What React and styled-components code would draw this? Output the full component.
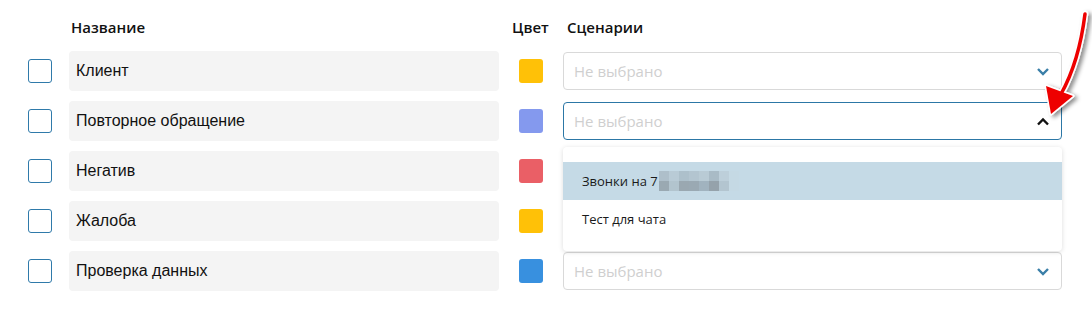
import React from "react";
import styled, { createGlobalStyle } from "styled-components";

const Global = createGlobalStyle`
  html, body { margin: 0; padding: 0; background: #fff; }
  body { font-family: "Open Sans", "Noto Sans", sans-serif; }
`;

const Page = styled.div`
  position: relative;
  width: 1092px;
  height: 311px;
  padding: 17px 0 0 28px;
  box-sizing: border-box;
  overflow: hidden;
`;

const Row = styled.div`
  display: flex;
  align-items: center;
  height: 40px;
  margin-bottom: 10px;
`;

const HeaderRow = styled.div`
  display: flex;
  align-items: center;
  height: 20px;
  margin-bottom: 14px;
`;

const HeadCell = styled.div`
  width: ${(p) => p.$w}px;
  padding-left: ${(p) => p.$pl || 0}px;
  box-sizing: border-box;
  font-family: "Open Sans", sans-serif;
  font-weight: 600;
  font-size: 15px;
  color: #111;
  line-height: 20px;
  white-space: nowrap;
`;

const Checkbox = styled.div`
  width: 24px;
  height: 24px;
  box-sizing: border-box;
  border: 1px solid #2f7aaa;
  border-radius: 3px;
  background: #fff;
  margin-right: 17px;
  flex: none;
`;

const NameBox = styled.div`
  width: 430px;
  height: 40px;
  box-sizing: border-box;
  background: #f4f4f4;
  border-radius: 4px;
  display: flex;
  align-items: center;
  padding-left: 7px;
  font-family: "Liberation Sans", Arial, sans-serif;
  font-size: 16px;
  color: #111;
  flex: none;
`;

const Swatch = styled.div`
  width: 24px;
  height: 24px;
  border-radius: 3px;
  background: ${(p) => p.$color};
  margin: 0 20px;
  flex: none;
`;

const SelectWrap = styled.div`
  position: relative;
  width: 499px;
  flex: none;
`;

const SelectBox = styled.div`
  height: 38px;
  box-sizing: border-box;
  border: 1px solid ${(p) => (p.$open ? "#2c77a6" : "#d9d9d9")};
  border-radius: 4px;
  background: #fff;
  display: flex;
  align-items: center;
  justify-content: space-between;
  padding: 0 11px 0 10px;
`;

const Placeholder = styled.span`
  font-family: "Open Sans", sans-serif;
  font-size: 15px;
  color: #cfcfcf;
`;

const Menu = styled.div`
  position: absolute;
  left: 0;
  right: 0;
  top: 45px;
  z-index: 2;
  background: #fff;
  border-radius: 4px;
  box-shadow: 0 1px 5px rgba(0, 0, 0, 0.14);
  padding: 15px 0 13px;
`;

const MenuItem = styled.div`
  height: 38px;
  display: flex;
  align-items: center;
  padding-left: 19px;
  font-family: "Open Sans", sans-serif;
  font-size: 13px;
  color: #1a1a1a;
  background: ${(p) => (p.$active ? "#c5dae6" : "transparent")};
`;

const Pixelated = styled.span`
  display: inline-grid;
  grid-template-columns: repeat(8, 10px);
  grid-auto-rows: 10px;
  margin-left: 1px;
`;

const Pix = styled.span`
  background: ${(p) => p.$c};
`;

const Overlay = styled.svg`
  position: absolute;
  left: 0;
  top: 0;
  pointer-events: none;
  z-index: 5;
`;

const Chevron = ({ up, color }) => (
  <svg width="14" height="9" viewBox="0 0 14 9">
    <path
      d={up ? "M2 7.5 L7 2.5 L12 7.5" : "M2 2 L7 7 L12 2"}
      fill="none"
      stroke={color}
      strokeWidth="2.4"
      strokeLinecap="butt"
      strokeLinejoin="miter"
    />
  </svg>
);

const rows = [
  { name: "Клиент", color: "#ffc107" },
  { name: "Повторное обращение", color: "#8499ee", open: true },
  { name: "Негатив", color: "#ea5f66" },
  { name: "Жалоба", color: "#ffc107" },
  { name: "Проверка данных", color: "#3890df" },
];

const pixTop = ["#aebfca", "#b9cbd6", "#adc0cb", "#b3c5d0", "#b9cbd5", "#a9bbc6", "#bdcfda", "#c5d9e4"];
const pixBot = ["#9aa9b2", "#b2c4ce", "#9aa8b1", "#9aa9b3", "#a1b3bf", "#95a2ab", "#b3c5d0", "#c5d9e4"];

export default function App() {
  return (
    <>
      <Global />
      <Page>
        <HeaderRow>
          <HeadCell $w={41} />
          <HeadCell $w={430} $pl={2}>Название</HeadCell>
          <HeadCell $w={64} $pl={13}>Цвет</HeadCell>
          <HeadCell $w={200} $pl={4}>Сценарии</HeadCell>
        </HeaderRow>
        {rows.map((r) => (
          <Row key={r.name}>
            <Checkbox />
            <NameBox>{r.name}</NameBox>
            <Swatch $color={r.color} />
            <SelectWrap>
              <SelectBox $open={r.open}>
                <Placeholder>Не выбрано</Placeholder>
                <Chevron up={r.open} color={r.open ? "#111" : "#3a7fa8"} />
              </SelectBox>
              {r.open && (
                <Menu>
                  <MenuItem $active>
                    Звонки на 7
                    <Pixelated>
                      {pixTop.map((c, i) => (
                        <Pix key={"t" + i} $c={c} />
                      ))}
                      {pixBot.map((c, i) => (
                        <Pix key={"b" + i} $c={c} />
                      ))}
                    </Pixelated>
                  </MenuItem>
                  <MenuItem>Тест для чата</MenuItem>
                </Menu>
              )}
            </SelectWrap>
          </Row>
        ))}
        <Overlay width="1092" height="311" viewBox="0 0 1092 311">
          <defs>
            <filter id="sh" x="-50%" y="-50%" width="200%" height="200%">
              <feDropShadow dx="3" dy="2" stdDeviation="2" floodColor="#000" floodOpacity="0.45" />
            </filter>
          </defs>
          <g filter="url(#sh)">
            <path d="M1085 14 Q1079 62 1061 94" fill="none" stroke="#fff" strokeWidth="6.5" strokeLinecap="round" />
            <polygon points="1051,114 1046,86 1073,96" fill="#fff" stroke="#fff" strokeWidth="3" strokeLinejoin="round" />
            <path d="M1085 14 Q1079 62 1061 94" fill="none" stroke="#ee0000" strokeWidth="3.5" strokeLinecap="round" />
            <polygon points="1051,114 1046,86 1073,96" fill="#ee0000" />
          </g>
        </Overlay>
      </Page>
    </>
  );
}
